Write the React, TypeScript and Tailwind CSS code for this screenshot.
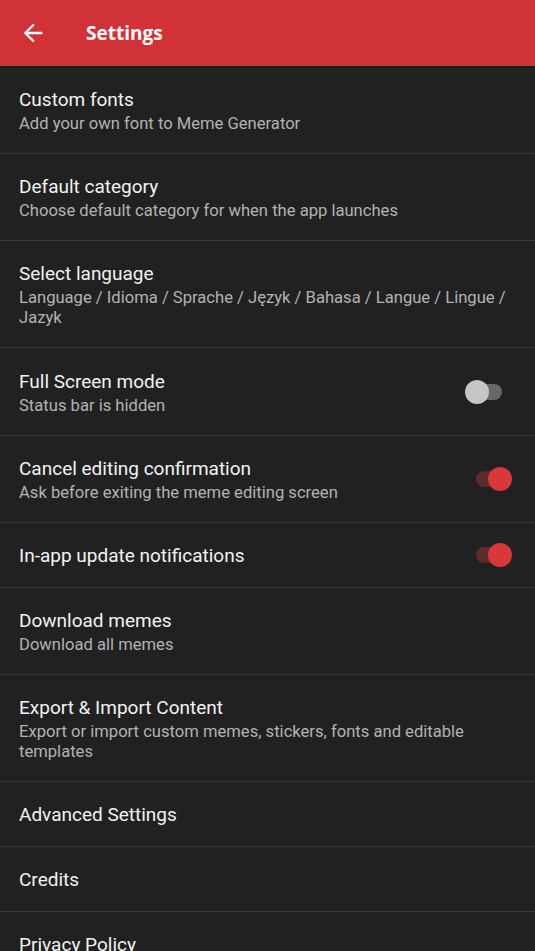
import React from 'react';

interface SettingItem {
  title: string;
  subtitle?: string;
  toggle?: 'on' | 'off';
}

const items: SettingItem[] = [
  { title: 'Custom fonts', subtitle: 'Add your own font to Meme Generator' },
  { title: 'Default category', subtitle: 'Choose default category for when the app launches' },
  {
    title: 'Select language',
    subtitle: 'Language / Idioma / Sprache / Język / Bahasa / Langue / Lingue / Jazyk',
  },
  { title: 'Full Screen mode', subtitle: 'Status bar is hidden', toggle: 'off' },
  { title: 'Cancel editing confirmation', subtitle: 'Ask before exiting the meme editing screen', toggle: 'on' },
  { title: 'In-app update notifications', toggle: 'on' },
  { title: 'Download memes', subtitle: 'Download all memes' },
  {
    title: 'Export & Import Content',
    subtitle: 'Export or import custom memes, stickers, fonts and editable templates',
  },
  { title: 'Advanced Settings' },
  { title: 'Credits' },
  { title: 'Privacy Policy' },
];

function Toggle({ on }: { on: boolean }) {
  return (
    <div className="relative w-[47px] h-6 shrink-0 mr-[23px]">
      {on ? (
        <>
          <div className="absolute left-[11px] top-[4px] w-[31px] h-[16px] rounded-full bg-[#5e2b2c]" />
          <div className="absolute left-[23px] top-0 w-6 h-6 rounded-full bg-[#d9373a]" />
        </>
      ) : (
        <>
          <div className="absolute left-[6px] top-[4px] w-[31px] h-[16px] rounded-full bg-[#686868]" />
          <div className="absolute left-0 top-0 w-6 h-6 rounded-full bg-[#c6c6c6]" />
        </>
      )}
    </div>
  );
}

export default function App() {
  return (
    <div className="w-[535px] h-[951px] overflow-hidden bg-[#212121] font-['Roboto',sans-serif]">
      {/* app bar */}
      <div className="h-[66px] bg-[#d03238] flex items-center">
        <svg width="28" height="28" viewBox="0 0 24 24" className="ml-[19px] fill-white">
          <path d="M20 11H7.83l5.59-5.59L12 4l-8 8 8 8 1.41-1.41L7.83 13H20v-2z" />
        </svg>
        <span className="ml-[39px] text-white text-[19px] font-bold font-['Open_Sans',sans-serif]">
          Settings
        </span>
      </div>
      <div className="h-px bg-[#1a1a1a]" />

      {/* list */}
      <div>
        {items.map((item) => (
          <div key={item.title} className="border-b border-[#3a3a3a]">
            <div className="flex items-center">
              <div
                className={
                  item.toggle === 'off'
                    ? 'flex-1 pl-[19px] pr-[18px] pt-[22px] pb-[19px]'
                    : 'flex-1 pl-[19px] pr-[18px] pt-[21px] pb-[19px]'
                }
              >
                <div className="text-[19px] leading-6 text-[#f2f2f2]">{item.title}</div>
                {item.subtitle && (
                  <div className="mt-[2px] text-[16.6px] leading-5 text-[#b3b3b3]">{item.subtitle}</div>
                )}
              </div>
              {item.toggle && <Toggle on={item.toggle === 'on'} />}
            </div>
          </div>
        ))}
      </div>
    </div>
  );
}
